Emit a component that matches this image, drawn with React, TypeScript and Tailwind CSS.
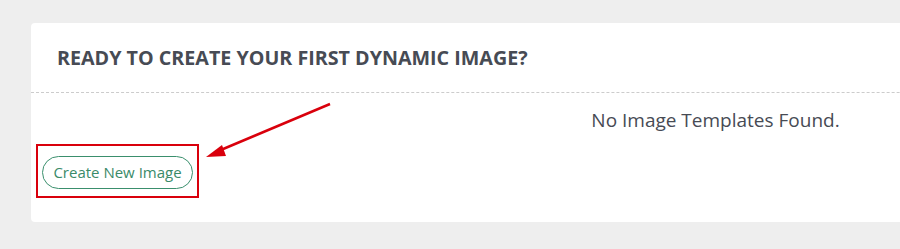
import React from 'react';

const font = { fontFamily: '"Open Sans", "Noto Sans", sans-serif' };

const Arrow = () => (
  <svg
    className="absolute left-0 top-0 pointer-events-none"
    width="900"
    height="249"
    viewBox="0 0 900 249"
  >
    <line x1="330" y1="104" x2="216" y2="152" stroke="#d9000c" strokeWidth="2.5" />
    <polygon points="206,157 222,145 226,156" fill="#d9000c" />
  </svg>
);

export default function App() {
  return (
    <div className="relative w-[900px] h-[249px] overflow-hidden bg-[#eeeeee] pt-[23px] pl-[31px]" style={font}>
      <div className="w-[1369px] bg-white rounded-[4px]">
        <div className="h-[70px] flex items-center px-[26px] border-b border-dashed border-[#cccccc]">
          <h2 className="text-[19.7px] font-bold text-[#474b54]">
            READY TO CREATE YOUR FIRST DYNAMIC IMAGE?
          </h2>
        </div>
        <div className="px-[5px] pt-[14px] pb-[24px]">
          <p className="text-center text-[19px] text-[#474b54] leading-[26px]">No Image Templates Found.</p>
          <div className="mt-[11px] inline-block border-2 border-[#d9000c] pt-[10px] pb-[7px] px-[4px]">
            <button className="h-[33px] w-[151px] rounded-full border border-[#3a8f6d] text-[15px] text-[#3a8a69] bg-white">
              Create New Image
            </button>
          </div>
        </div>
      </div>
      <Arrow />
    </div>
  );
}
